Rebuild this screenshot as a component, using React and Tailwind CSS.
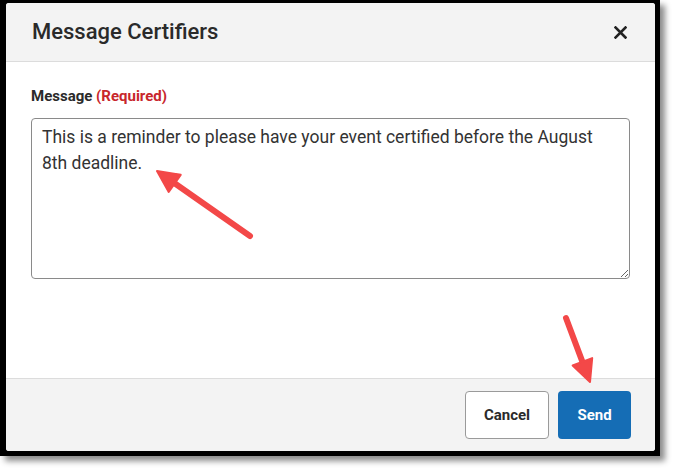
import { useState } from "react"

const Arrow = ({ x1, y1, x2, y2 }) => {
  // arrow pointing from (x1,y1) to tip (x2,y2)
  const ang = Math.atan2(y2 - y1, x2 - x1)
  const len = 24
  const spread = 0.45
  const bx = x2 - Math.cos(ang) * (len - 6)
  const by = y2 - Math.sin(ang) * (len - 6)
  const p1 = [x2 - Math.cos(ang - spread) * len, y2 - Math.sin(ang - spread) * len]
  const p2 = [x2 - Math.cos(ang + spread) * len, y2 - Math.sin(ang + spread) * len]
  return (
    <g>
      <line x1={x1} y1={y1} x2={bx} y2={by} stroke="#f34848" strokeWidth="6" strokeLinecap="round" />
      <polygon points={`${x2},${y2} ${p1[0]},${p1[1]} ${p2[0]},${p2[1]}`} fill="#f34848" stroke="#f34848" strokeWidth="2" strokeLinejoin="round" />
    </g>
  )
}

const App = () => {
  const [message, setMessage] = useState(
    "This is a reminder to please have your event certified before the August 8th deadline."
  )

  return (
    <div className="relative w-[676px] h-[474px] bg-white font-['Roboto',sans-serif] text-[#222]">
      {/* Frame */}
      <div className="w-[660px] h-[456px] bg-black pl-[6px] pt-[3px] pr-[5px] pb-[5px] shadow-[5px_5px_6px_rgba(0,0,0,0.45)]">
        <div className="w-full h-full bg-white rounded-[3px] flex flex-col overflow-hidden">
          {/* Header */}
          <div className="h-[59px] shrink-0 bg-[#f3f3f3] border-b border-[#dcdcdc] flex items-center justify-between pl-[26px] pr-[28px]">
            <h1 className="text-[22px] font-medium text-[#2a2a2a] leading-[28px]">Message Certifiers</h1>
            <button className="text-[#222]">
              <svg width="13" height="13" viewBox="0 0 13 13">
                <path d="M1.5 1.5 L11.5 11.5 M11.5 1.5 L1.5 11.5" stroke="#222" strokeWidth="2.6" strokeLinecap="square" />
              </svg>
            </button>
          </div>

          {/* Body */}
          <div className="flex-1 px-[25px] pt-[24px]">
            <label className="block text-[15px] leading-[20px] font-bold text-[#2a2a2a]">
              Message <span className="text-[#c8262b]">(Required)</span>
            </label>
            <textarea
              value={message}
              onChange={(e) => setMessage(e.target.value)}
              className="mt-[12px] block w-full h-[161px] border border-[#8a8a8a] rounded-[4px] pl-[10px] pr-[24px] pt-[5px] text-[17.5px] leading-[26px] text-[#333] outline-none"
            />
          </div>

          {/* Footer */}
          <div className="h-[73px] shrink-0 bg-[#f3f3f3] border-t border-[#dcdcdc] flex items-center justify-end gap-[9px] pr-[24px]">
            <button className="w-[84px] h-[48px] bg-white border border-[#9a9a9a] rounded-[4px] text-[15px] font-bold text-[#2a2a2a]">
              Cancel
            </button>
            <button className="w-[73px] h-[48px] bg-[#156db5] rounded-[4px] text-[15px] font-bold text-white">
              Send
            </button>
          </div>
        </div>
      </div>

      {/* Annotation arrows */}
      <svg className="absolute inset-0 pointer-events-none" width="676" height="474">
        <Arrow x1={250} y1={236} x2={157} y2={171} />
        <Arrow x1={566} y1={318} x2={590} y2={382} />
      </svg>
    </div>
  )
}

export default App
